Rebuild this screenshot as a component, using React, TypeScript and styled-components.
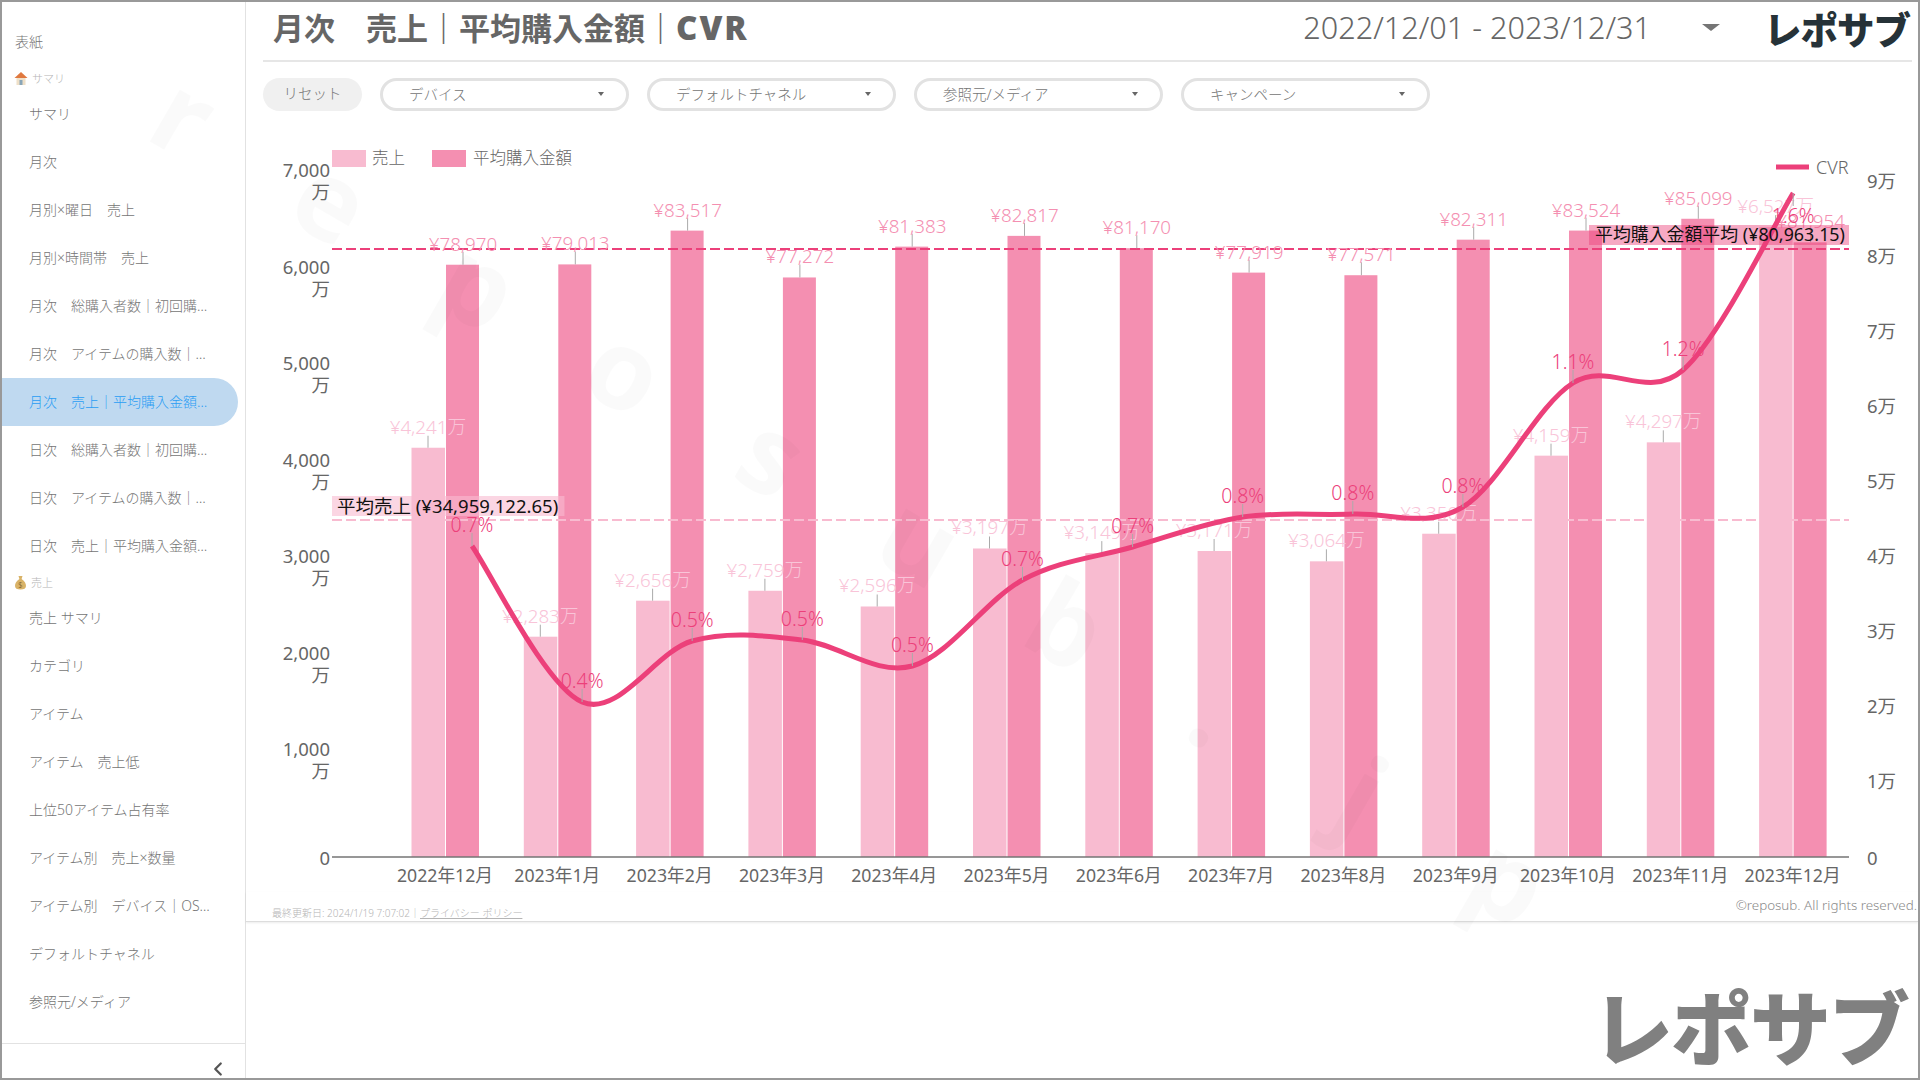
import React from "react";
import styled, { createGlobalStyle } from "styled-components";
import { ChevronLeft } from "lucide-react";

const FONT = '"Noto Sans", "Noto Sans CJK JP", sans-serif';

const GlobalStyle = createGlobalStyle`
  html, body { margin: 0; padding: 0; background: #fff; }
  body { font-family: ${FONT}; }
`;

const menuTop = ["サマリ", "月次", "月別×曜日　売上", "月別×時間帯　売上", "月次　総購入者数｜初回購入者数｜リピート購入者数", "月次　アイテムの購入数｜アイテム単価", "月次　売上｜平均購入金額｜CVR", "日次　総購入者数｜初回購入者数｜リピート購入者数", "日次　アイテムの購入数｜アイテム単価", "日次　売上｜平均購入金額｜CVR"];
const menuSales = ["売上 サマリ", "カテゴリ", "アイテム", "アイテム　売上低", "上位50アイテム占有率", "アイテム別　売上×数量", "アイテム別　デバイス｜OS別", "デフォルトチャネル", "参照元/メディア"];
const filters = ["デバイス", "デフォルトチャネル", "参照元/メディア", "キャンペーン"];

const months = ["2022年12月", "2023年1月", "2023年2月", "2023年3月", "2023年4月", "2023年5月", "2023年6月", "2023年7月", "2023年8月", "2023年9月", "2023年10月", "2023年11月", "2023年12月"];
const sales = [4241, 2283, 2656, 2759, 2596, 3197, 3149, 3171, 3064, 3350, 4159, 4297, 6527];
const buys = [78970, 79013, 83517, 77272, 81383, 82817, 81170, 77919, 77571, 82311, 83524, 85099, 81954];
const cvrY = [546, 702, 641, 640, 666, 580, 547, 517, 514, 507, 383, 370, 193];
const cvrText = ["0.7%", "0.4%", "0.5%", "0.5%", "0.5%", "0.7%", "0.7%", "0.8%", "0.8%", "0.8%", "1.1%", "1.2%", "1.6%"];

const AXIS_Y = 857;
const PERIOD = 112.3;
const salesY = (v: number) => AXIS_Y - v * 0.0965;
const buyY = (v: number) => AXIS_Y - (v / 10000) * 75;
const cvrX = (i: number) => 472 + i * 110.1;

const cvrPath = () => {
  const pts = cvrY.map((y, i) => [cvrX(i), y]);
  let d = `M${pts[0][0]} ${pts[0][1]}`;
  for (let i = 0; i < pts.length - 1; i++) {
    const p0 = pts[Math.max(i - 1, 0)];
    const p1 = pts[i];
    const p2 = pts[i + 1];
    const p3 = pts[Math.min(i + 2, pts.length - 1)];
    d += ` C${p1[0] + (p2[0] - p0[0]) / 6} ${p1[1] + (p2[1] - p0[1]) / 6} ${p2[0] - (p3[0] - p1[0]) / 6} ${p2[1] - (p3[1] - p1[1]) / 6} ${p2[0]} ${p2[1]}`;
  }
  return d;
};

const Page = styled.div`
  position: relative;
  box-sizing: border-box;
  width: 1920px;
  height: 1080px;
  border: 2px solid #999;
  display: flex;
  overflow: hidden;
  background: #fff;
`;

const Sidebar = styled.aside`
  box-sizing: border-box;
  width: 244px;
  flex: none;
  border-right: 1px solid #e2e2e2;
  display: flex;
  flex-direction: column;
  padding-top: 16px;
`;

const CoverLink = styled.div`
  height: 48px;
  line-height: 48px;
  padding-left: 13px;
  font-size: 14px;
  font-weight: 300;
  color: #757575;
`;

const GroupHeading = styled.div`
  height: 24px;
  display: flex;
  align-items: center;
  gap: 4px;
  padding-left: 12px;
  font-size: 11px;
  font-weight: 300;
  color: #b5b5b5;
`;

const NavRow = styled.div<{ $active?: boolean }>`
  box-sizing: border-box;
  width: 236px;
  height: 48px;
  line-height: 48px;
  padding: 0 26px 0 27px;
  font-size: 14px;
  font-weight: 300;
  white-space: nowrap;
  overflow: hidden;
  text-overflow: ellipsis;
  border-radius: 0 24px 24px 0;
  color: ${(p) => (p.$active ? "#2a9df4" : "#757575")};
  background: ${(p) => (p.$active ? "#bfd9f0" : "transparent")};
`;

const CollapseBar = styled.div`
  margin-top: auto;
  height: 35px;
  box-sizing: border-box;
  border-top: 1px solid #e2e2e2;
  display: flex;
  justify-content: flex-end;
  align-items: flex-start;
  padding: 14px 16px 0 0;
  color: #555;
`;

const Main = styled.main`
  flex: 1;
  min-width: 0;
  display: flex;
  flex-direction: column;
`;

const Header = styled.header`
  box-sizing: border-box;
  height: 60px;
  margin: 0 6px 0 17px;
  padding: 0 0 8px 10px;
  border-bottom: 2px solid #e6e6e6;
  display: flex;
  align-items: center;
`;

const Title = styled.h1`
  margin: 0;
  font-family: "Noto Sans CJK JP", sans-serif;
  font-size: 31px;
  font-weight: 700;
  color: #666;
  white-space: nowrap;
`;

const TitleLatin = styled.span`
  font-family: "Noto Sans", sans-serif;
  font-size: 33px;
  font-weight: 900;
  letter-spacing: 2px;
`;

const DateRange = styled.div`
  margin-left: auto;
  font-family: "Noto Sans", sans-serif;
  font-size: 30.6px;
  font-weight: 300;
  color: #666;
  white-space: nowrap;
`;

const DateCaret = styled.span`
  margin-left: 51px;
  width: 0;
  height: 0;
  border-left: 9px solid transparent;
  border-right: 9px solid transparent;
  border-top: 7px solid #757575;
`;

const HeaderLogo = styled.div`
  margin-left: 44px;
  width: 148px;
  font-family: "Noto Sans CJK JP", sans-serif;
  font-size: 37.5px;
  font-weight: 900;
  letter-spacing: -1px;
  color: #263238;
  white-space: nowrap;
`;

const FilterBar = styled.div`
  display: flex;
  gap: 18px;
  margin: 16px 0 9px 17px;
`;

const ResetButton = styled.div`
  width: 99px;
  height: 33px;
  line-height: 31px;
  border-radius: 17px;
  background: #f0f0f0;
  text-align: center;
  font-size: 14.5px;
  font-weight: 300;
  color: #757575;
`;

const FilterPill = styled.div`
  box-sizing: border-box;
  width: 249px;
  height: 33px;
  border: 3px solid #e2e2e2;
  border-radius: 17px;
  padding: 0 22px 2px 26px;
  display: flex;
  align-items: center;
  justify-content: space-between;
  font-size: 14.5px;
  font-weight: 300;
  color: #757575;
`;

const PillCaret = styled.span`
  width: 0;
  height: 0;
  border-left: 3.5px solid transparent;
  border-right: 3.5px solid transparent;
  border-top: 4px solid #666;
`;

const ChartSvg = styled.svg`
  display: block;
  flex: none;
`;

const AxisText = styled.text<{ $size?: number }>`
  font-size: ${(p) => p.$size ?? 18.5}px;
  fill: #666;
  dominant-baseline: central;
`;

const LegendText = styled.text<{ $size?: number }>`
  font-size: ${(p) => p.$size ?? 16.5}px;
  font-weight: 300;
  fill: #666;
  dominant-baseline: central;
`;

const DataLabel = styled.text<{ $color: string; $size: number }>`
  font-size: ${(p) => p.$size}px;
  font-weight: 300;
  fill: ${(p) => p.$color};
  text-anchor: middle;
  dominant-baseline: central;
`;

const AvgText = styled.text<{ $size: number }>`
  font-size: ${(p) => p.$size}px;
  fill: #111;
  dominant-baseline: central;
`;

const Footer = styled.footer`
  box-sizing: border-box;
  height: 30px;
  flex: none;
  border-bottom: 1px solid #ddd;
  box-shadow: 0 1px 2px rgba(0, 0, 0, 0.08);
  display: flex;
  justify-content: space-between;
  padding: 0 1px 0 26px;
`;

const UpdatedAt = styled.div`
  align-self: flex-end;
  padding-bottom: 1px;
  font-size: 10px;
  font-weight: 300;
  color: #b5b5b5;
`;

const PolicyLink = styled.span`
  text-decoration: underline;
`;

const Copyright = styled.div`
  padding-top: 4px;
  font-size: 13.4px;
  font-weight: 300;
  color: #8a8a8a;
`;

const BrandArea = styled.div`
  flex: 1;
  display: flex;
  justify-content: flex-end;
  align-items: flex-end;
  padding: 0 10px 6px 0;
`;

const BrandLogo = styled.div`
  font-family: "Noto Sans CJK JP", sans-serif;
  font-size: 81px;
  line-height: 96px;
  font-weight: 900;
  letter-spacing: -2px;
  color: #808080;
  white-space: nowrap;
`;

const Watermark = styled.div`
  position: absolute;
  left: 110px;
  top: 8px;
  height: 120px;
  display: flex;
  transform: rotate(30deg);
  transform-origin: 0 50%;
  pointer-events: none;
`;

const WatermarkLetter = styled.span`
  width: 170px;
  text-align: center;
  font-size: 110px;
  line-height: 120px;
  font-weight: 700;
  color: rgba(0, 0, 0, 0.02);
`;

const HouseIcon = () => (
  <svg width="14" height="15" viewBox="0 0 14 15">
    <rect x="2.5" y="6" width="9" height="8" fill="#efe0c8" />
    <path d="M7 1 L13.5 7 L0.5 7 Z" fill="#e0793f" />
    <rect x="5.5" y="9" width="3" height="5" fill="#8aa6b8" />
  </svg>
);

const BagIcon = () => (
  <svg width="13" height="15" viewBox="0 0 13 15">
    <path d="M4.5 1 H8.5 L7.6 4 C11 6 12 9 12 11 C12 13.5 10 14.5 6.5 14.5 C3 14.5 1 13.5 1 11 C1 9 2 6 5.4 4 Z" fill="#d9b368" />
    <text x="6.5" y="12.5" fontSize="7.5" textAnchor="middle" fill="#6b5222">$</text>
  </svg>
);

const Chart = () => (
  <ChartSvg width="1672" height="772" viewBox="246 120 1672 772">
    {/* legend */}
    <rect x="332" y="150" width="34" height="17" fill="#f8bbd0" />
    <LegendText x="372" y="157.5">売上</LegendText>
    <rect x="432" y="150" width="34" height="17" fill="#f48fb1" />
    <LegendText x="473" y="157.5">平均購入金額</LegendText>
    <rect x="1776" y="164.5" width="33" height="5" fill="#ec407a" />
    <LegendText x="1816" y="166.5" $size={18}>CVR</LegendText>

    {/* bars */}
    {months.map((m, i) => (
      <g key={m}>
        <rect x={411.5 + i * PERIOD} y={salesY(sales[i])} width="33.5" height={AXIS_Y - salesY(sales[i])} fill="#f8bbd0" />
        <rect x={446 + i * PERIOD} y={buyY(buys[i])} width="33" height={AXIS_Y - buyY(buys[i])} fill="#f48fb1" />
      </g>
    ))}

    {/* axis */}
    <line x1="332" x2="1849" y1={AXIS_Y} y2={AXIS_Y} stroke="#757575" strokeWidth="1.5" />
    {[1000, 2000, 3000, 4000, 5000, 6000, 7000].map((v) => (
      <g key={v}>
        <AxisText x="330" y={salesY(v) - 12} textAnchor="end">{v.toLocaleString("en-US")}</AxisText>
        <AxisText x="330" y={salesY(v) + 10} textAnchor="end">万</AxisText>
      </g>
    ))}
    <AxisText x="330" y={AXIS_Y} textAnchor="end">0</AxisText>
    {[1, 2, 3, 4, 5, 6, 7, 8, 9].map((v) => (
      <AxisText key={v} x="1867" y={AXIS_Y - v * 75 - 1.5}>{v}万</AxisText>
    ))}
    <AxisText x="1867" y={AXIS_Y}>0</AxisText>
    {months.map((m, i) => (
      <AxisText key={m} x={445 + i * PERIOD} y="875" textAnchor="middle" $size={17.7}>{m}</AxisText>
    ))}

    {/* average lines */}
    <line x1="332" x2="1849" y1="520" y2="520" stroke="#f8bbd0" strokeWidth="2" strokeDasharray="10 4" />
    <line x1="332" x2="1849" y1="249" y2="249" stroke="#ec407a" strokeWidth="2" strokeDasharray="10 4" />

    {/* data labels */}
    {months.map((m, i) => {
      const sx = 428 + i * PERIOD;
      const bx = 463 + i * PERIOD;
      const sy = salesY(sales[i]);
      const by = buyY(buys[i]);
      return (
        <g key={m}>
          <line x1={sx} x2={sx} y1={sy - 12} y2={sy} stroke="#aaa" />
          <DataLabel x={sx} y={sy - 21} $color="#f9c4d8" $size={18.8}>¥{sales[i].toLocaleString("en-US")}万</DataLabel>
          <line x1={bx} x2={bx} y1={by - 13} y2={by} stroke="#aaa" />
          <DataLabel x={bx} y={by - 21} $color="#f48fb1" $size={18.8}>¥{buys[i].toLocaleString("en-US")}</DataLabel>
        </g>
      );
    })}

    {/* cvr line */}
    <path d={cvrPath()} fill="none" stroke="#ec407a" strokeWidth="5" />
    {months.map((m, i) => {
      const x = cvrX(i);
      const y = cvrY[i];
      const dir = i === 12 ? 1 : -1;
      return (
        <g key={m}>
          <line x1={x} x2={x} y1={y + dir * 13} y2={y} stroke="#aaa" />
          <DataLabel x={x} y={y + dir * 22} $color="#ec407a" $size={19.5}>{cvrText[i]}</DataLabel>
        </g>
      );
    })}

    {/* average labels */}
    <rect x="332" y="496" width="232.5" height="20" fill="#f8bbd0" fillOpacity="0.6" />
    <AvgText x="337" y="505.5" $size={18.5}>平均売上 (¥34,959,122.65)</AvgText>
    <rect x="1589" y="225" width="260" height="20" fill="#ec407a" fillOpacity="0.45" />
    <AvgText x="1595" y="234" $size={17.9}>平均購入金額平均 (¥80,963.15)</AvgText>
  </ChartSvg>
);

export default function App() {
  return (
    <Page>
      <GlobalStyle />
      <Sidebar>
        <CoverLink>表紙</CoverLink>
        <GroupHeading><HouseIcon />サマリ</GroupHeading>
        {menuTop.map((label, i) => (
          <NavRow key={label} $active={i === 6}>{label}</NavRow>
        ))}
        <GroupHeading><BagIcon />売上</GroupHeading>
        {menuSales.map((label) => (
          <NavRow key={label}>{label}</NavRow>
        ))}
        <CollapseBar><ChevronLeft size={22} strokeWidth={2.5} /></CollapseBar>
      </Sidebar>
      <Main>
        <Header>
          <Title>月次　売上｜平均購入金額｜<TitleLatin>CVR</TitleLatin></Title>
          <DateRange>2022/12/01 - 2023/12/31</DateRange>
          <DateCaret />
          <HeaderLogo>レポサブ</HeaderLogo>
        </Header>
        <FilterBar>
          <ResetButton>リセット</ResetButton>
          {filters.map((f) => (
            <FilterPill key={f}>{f}<PillCaret /></FilterPill>
          ))}
        </FilterBar>
        <Chart />
        <Footer>
          <UpdatedAt>最終更新日: 2024/1/19 7:07:02｜<PolicyLink>プライバシー ポリシー</PolicyLink></UpdatedAt>
          <Copyright>©reposub. All rights reserved.</Copyright>
        </Footer>
        <BrandArea><BrandLogo>レポサブ</BrandLogo></BrandArea>
      </Main>
      <Watermark>
        {"reposub.jp".split("").map((c, i) => (
          <WatermarkLetter key={i}>{c}</WatermarkLetter>
        ))}
      </Watermark>
    </Page>
  );
}
